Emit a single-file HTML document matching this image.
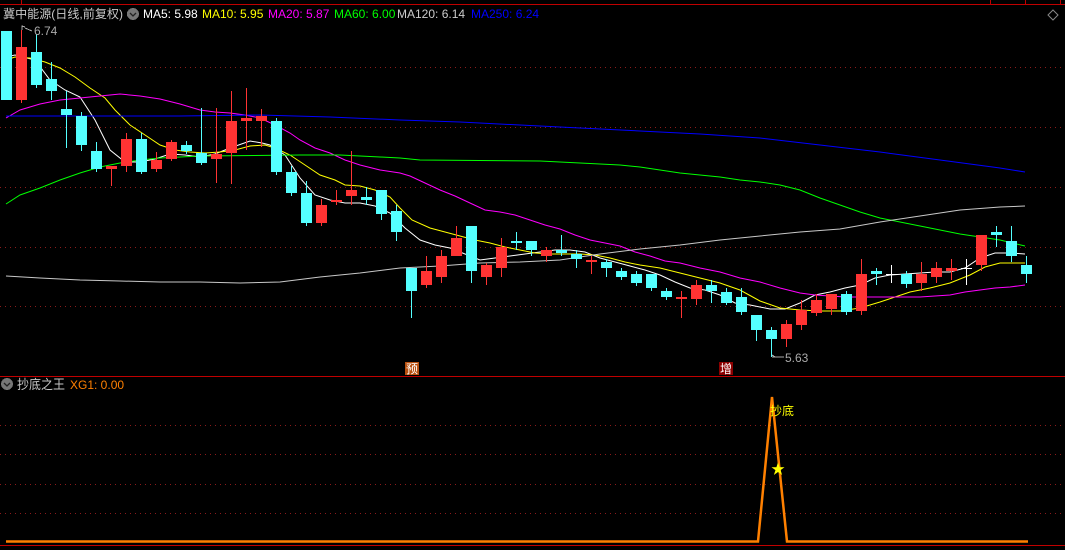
<!DOCTYPE html>
<html><head><meta charset="utf-8">
<style>
html,body{margin:0;padding:0;background:#000;width:1065px;height:550px;overflow:hidden;}
svg{display:block}
text{font-family:"Liberation Sans","Noto Sans CJK SC",sans-serif;}
</style></head>
<body>
<svg id="s" width="1065" height="550" xmlns="http://www.w3.org/2000/svg" shape-rendering="crispEdges">
<rect width="1065" height="550" fill="#000"/>
<line x1="0" y1="4.5" x2="1065" y2="4.5" stroke="#c00000"/>
<line x1="21.5" y1="0" x2="21.5" y2="4" stroke="#c00000"/>
<line x1="990.5" y1="0" x2="990.5" y2="4" stroke="#c00000"/>
<line x1="1025.5" y1="0" x2="1025.5" y2="4" stroke="#c00000"/>
<line x1="1060.5" y1="0" x2="1060.5" y2="4" stroke="#c00000"/>
<path d="M1053 10 L1058 15 L1053 20 L1048 15 Z" fill="none" stroke="#888" stroke-width="1" shape-rendering="auto"/>
<g stroke="#8b1a1a" stroke-dasharray="1,4">
<line x1="0" y1="67.5" x2="1065" y2="67.5"/>
<line x1="0" y1="127.5" x2="1065" y2="127.5"/>
<line x1="0" y1="187.5" x2="1065" y2="187.5"/>
<line x1="0" y1="247.5" x2="1065" y2="247.5"/>
<line x1="0" y1="306.5" x2="1065" y2="306.5"/>
<line x1="0" y1="425.5" x2="1065" y2="425.5"/>
<line x1="0" y1="454.5" x2="1065" y2="454.5"/>
<line x1="0" y1="484.5" x2="1065" y2="484.5"/>
<line x1="0" y1="513.5" x2="1065" y2="513.5"/>
</g>
<line x1="0" y1="376.5" x2="1065" y2="376.5" stroke="#c00000"/>
<line x1="0" y1="545.5" x2="1065" y2="545.5" stroke="#c00000"/>
<g id="ma" fill="none" stroke-width="1" shape-rendering="auto"></g>
<g id="c"></g>
<text x="3" y="18" font-size="12" fill="#c8c8c8" textLength="120" lengthAdjust="spacingAndGlyphs">冀中能源(日线,前复权)</text>
<circle cx="133" cy="14" r="6" fill="#777"/>
<path d="M130 13 L133 16 L136 13" stroke="#222" stroke-width="1.3" fill="none" shape-rendering="auto"/>
<text x="143" y="18" font-size="12" fill="#fff">MA5: 5.98</text>
<text x="202" y="18" font-size="12" fill="#ff0">MA10: 5.95</text>
<text x="268" y="18" font-size="12" fill="#f0f">MA20: 5.87</text>
<text x="334" y="18" font-size="12" fill="#0f0">MA60: 6.00</text>
<text x="397" y="18" font-size="12" fill="#ccc">MA120: 6.14</text>
<text x="471" y="18" font-size="12" fill="#0000ff">MA250: 6.24</text>
<path d="M22 30 L22 26 L25 27 M25 28 L32 31" stroke="#aaa" fill="none"/>
<text x="34" y="35" font-size="12" fill="#aaa">6.74</text>
<path d="M775 357 L772 355 M772 357 L784 357" stroke="#aaa" fill="none"/>
<text x="785" y="362" font-size="12" fill="#aaa">5.63</text>
<rect x="405" y="362" width="14" height="13" fill="#b8500f"/>
<text x="406" y="373" font-size="12" fill="#fff">预</text>
<rect x="719" y="362" width="14" height="13" fill="#8b0000"/>
<text x="720" y="373" font-size="12" fill="#fff">增</text>
<circle cx="7" cy="384" r="6" fill="#777"/>
<path d="M4 383 L7 386 L10 383" stroke="#222" stroke-width="1.3" fill="none" shape-rendering="auto"/>
<text x="17" y="389" font-size="13" fill="#c8c8c8" textLength="48" lengthAdjust="spacingAndGlyphs">抄底之王</text>
<text x="70" y="389" font-size="12" fill="#ff8000">XG1: 0.00</text>
<polyline points="6,541.5 758,541.5 772,397 787,541.5 1028,541.5" fill="none" stroke="#ff8000" stroke-width="2.5" shape-rendering="auto"/>
<text x="770" y="415" font-size="12" fill="#ff0">抄底</text>
<text x="771" y="474" font-size="14" fill="#ff0">★</text>
</svg>
<script>
var NS="http://www.w3.org/2000/svg";
var C=[
[6,'c',31,100,31,100],[21,'r',47,100,30,103],[36,'c',52,85,34,88],[51,'c',79,91,62,100],[66,'c',109,115,91,148],
[81,'c',116,145,112,151],[96,'c',151,169,142,172],[111,'r',166,169,166,186],[126,'r',139,166,133,172],[141,'c',139,172,133,174],
[156,'r',160,169,152,172],[171,'r',142,159,140,161],[186,'c',145,151,141,154],[201,'c',153,163,108,165],[216,'r',154,159,108,183],
[231,'r',121,153,91,184],[246,'r',118,121,88,150],[261,'r',116,121,109,147],[276,'c',121,172,118,175],[291,'c',172,193,166,196],
[306,'c',193,223,181,226],[321,'r',205,223,199,226],[336,'r',200,202,190,205],[351,'r',190,196,151,205],[366,'c',197,200,187,205],
[381,'c',190,214,190,220],[396,'c',211,232,205,241],[411,'c',268,291,268,318],[426,'r',271,285,256,288],[441,'r',256,277,250,283],
[456,'r',238,256,226,256],[471,'c',226,271,226,283],[486,'r',265,277,263,285],[501,'r',247,268,238,277],[516,'c',241,243,232,250],
[531,'c',241,250,241,256],[546,'r',250,256,247,262],[561,'c',250,253,235,256],[576,'c',254,259,250,268],[591,'r',260,262,256,274],
[606,'c',262,268,259,277],[621,'c',271,277,268,280],[636,'c',274,283,271,286],[651,'c',274,288,274,291],[666,'c',291,297,288,300],
[681,'r',297,299,291,318],[696,'r',285,299,280,305],[711,'c',285,291,280,303],[726,'c',292,303,288,305],[741,'c',297,312,288,315],
[756,'c',315,330,315,341],[771,'c',330,339,327,357],[786,'r',324,339,320,347],[801,'r',310,325,300,330],[816,'r',300,313,294,316],
[831,'r',294,309,294,315],[846,'c',294,312,291,315],[861,'r',274,311,259,315],[876,'c',271,274,268,285],[891,'x',274,274,265,283],
[906,'c',274,284,271,288],[921,'r',274,283,262,291],[936,'r',268,277,262,283],[951,'r',268,271,259,280],[966,'x',268,268,259,285],
[981,'r',235,265,235,271],[996,'c',232,235,226,247],[1011,'c',241,256,226,262],[1026,'c',265,274,256,283]];
var g=document.getElementById('c');
C.forEach(function(d){
 var x=d[0],col=d[1]=='c'?'#54ffff':(d[1]=='r'?'#ff3333':'#fff');
 var l=document.createElementNS(NS,'line');l.setAttribute('x1',x+0.5);l.setAttribute('x2',x+0.5);l.setAttribute('y1',d[4]);l.setAttribute('y2',d[5]);l.setAttribute('stroke',col);g.appendChild(l);
 var r=document.createElementNS(NS,'rect');r.setAttribute('x',x-5);r.setAttribute('width',11);r.setAttribute('y',d[2]);r.setAttribute('height',Math.max(1,d[3]-d[2]));r.setAttribute('fill',col);g.appendChild(r);
});
var M=[
['#ffffff',"6,57 15,55 35,60 50,80 65,90 80,97 95,120 110,150 125,162 140,162 155,159 170,154 185,155 200,157 215,154 230,148 250,141 262,143 270,145 285,155 300,178 315,195 330,200 345,203 360,203 375,206 390,213 405,228 420,240 435,245 450,248 465,254 480,260 495,258 510,256 525,254 540,252 555,250 570,250 585,252 600,258 615,262 630,266 645,270 660,275 675,282 690,288 705,290 720,295 735,303 750,305 770,309 785,309 800,303 815,295 830,292 845,288 860,285 875,278 890,275 905,274 920,273 935,272 950,272 965,268 980,258 995,253 1010,253 1025,254"],
['#ffff00',"6,60 15,57 30,58 45,62 60,68 75,77 90,88 105,98 115,110 130,125 145,135 160,145 175,150 190,152 205,153 220,152 235,150 250,146 265,145 275,148 290,155 305,165 320,175 335,180 345,185 360,186 375,190 390,197 400,208 412,220 430,228 445,232 460,236 475,240 490,243 505,247 520,250 535,253 550,254 565,254 580,254 595,255 610,258 625,262 640,265 660,268 680,273 700,278 720,283 740,290 760,301 780,308 800,310 820,311 840,311 860,308 880,302 895,297 910,292 930,288 950,283 970,275 985,267 1000,263 1015,263 1025,263"],
['#ff00ff',"6,118 20,110 40,104 60,100 80,98 100,96 120,94 140,96 160,99 180,104 200,110 215,112 230,113 245,115 260,118 275,125 290,133 300,140 315,148 330,153 345,160 360,165 380,170 400,173 410,176 425,183 440,190 455,196 470,203 485,210 500,212 515,215 530,220 545,225 560,229 575,235 590,240 605,243 620,246 635,252 650,256 665,261 680,263 700,268 720,272 740,278 760,282 780,288 800,293 815,295 830,296 845,297 860,297 890,297 920,297 935,296 950,295 965,292 980,290 995,288 1010,287 1025,285"],
['#00ff00',"6,204 20,195 40,188 60,180 80,173 100,167 120,163 140,160 160,158 180,157 200,156 300,155 340,155 360,156 380,157 400,158 420,160 540,161 560,162 580,163 600,164 620,165 640,167 660,170 680,173 700,175 720,177 740,180 760,182 780,185 800,190 820,198 840,205 860,212 880,218 900,222 920,226 940,230 960,234 980,237 1000,240 1025,246"],
['#c8c8c8',"6,276 40,278 80,280 120,281 160,282 200,282 240,283 280,282 320,277 360,273 400,268 440,266 480,263 520,262 560,260 600,254 640,249 680,245 720,240 760,236 800,232 840,229 880,222 920,216 960,210 1000,207 1025,206"],
['#0000ff',"6,116 60,116 120,116 180,116 260,115 330,117 400,120 460,122 520,125 580,128 640,131 700,134 760,138 820,145 880,152 940,160 1000,168 1025,172"]];
var mg=document.getElementById('ma');
M.forEach(function(m){var p=document.createElementNS(NS,'polyline');p.setAttribute('points',m[1]);p.setAttribute('stroke',m[0]);mg.appendChild(p);});
</script>
</body></html>
